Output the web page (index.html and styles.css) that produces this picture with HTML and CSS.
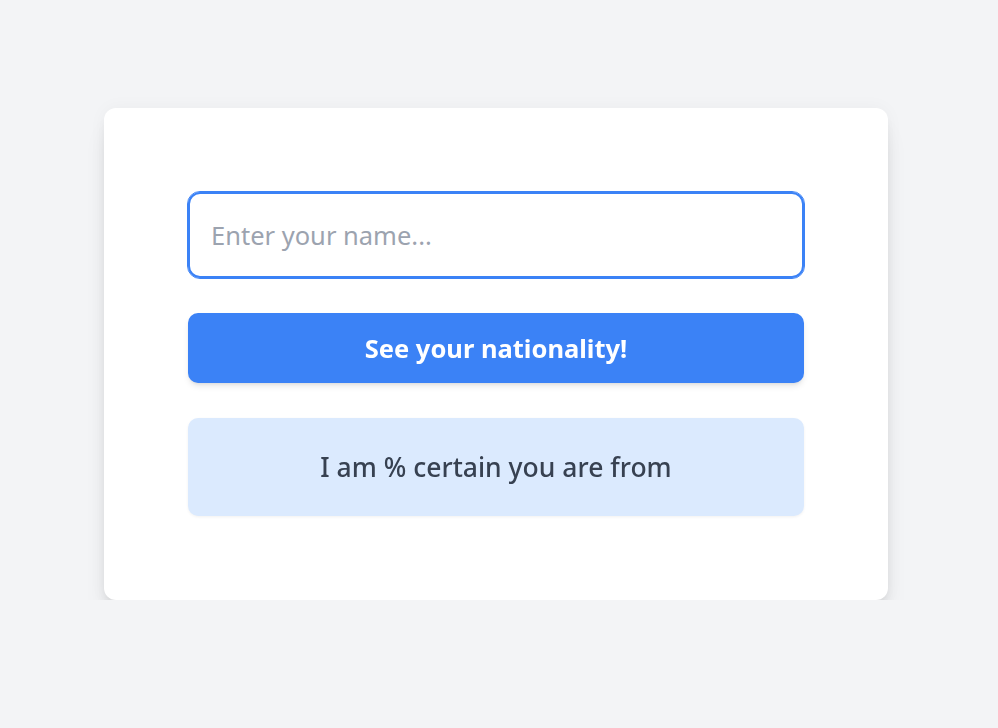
FILE: index.html
```html
<!DOCTYPE html>
<html lang="en">
<head>
<meta charset="utf-8">
<title>Nationality</title>
<link rel="stylesheet" href="styles.css">
</head>
<body>
<main class="page">
  <section class="card">
    <input class="name-input" type="text" placeholder="Enter your name..." autofocus>
    <button class="submit" type="button">See your nationality!</button>
    <div class="result">I am % certain you are from</div>
  </section>
</main>
</body>
</html>
```

FILE: styles.css
```css
html, body {
  margin: 0;
  padding: 0;
  background: #f3f4f6;
  font-family: "Noto Sans", "Open Sans", sans-serif;
}
.page {
  padding: 108px 110px 0 104px;
}
.card {
  background: #ffffff;
  border-radius: 12px;
  box-shadow: 0 20px 25px -5px rgba(0,0,0,0.1), 0 8px 12px -4px rgba(0,0,0,0.08), 0 0 18px rgba(0,0,0,0.04);
  padding: 84px;
  display: flex;
  flex-direction: column;
  gap: 35px;
}
.name-input {
  box-sizing: border-box;
  height: 86px;
  margin: 0;
  width: 100%;
  border: 2px solid #3b82f6;
  outline: 1px solid #3b82f6;
  border-radius: 12px;
  padding: 0 21px;
  font-family: inherit;
  font-size: 25.5px;
  color: #111827;
  caret-color: #000;
}
.name-input::placeholder {
  color: #9ca3af;
}
.submit {
  height: 70px;
  border: none;
  border-radius: 10px;
  background: #3b82f6;
  color: #ffffff;
  font-family: inherit;
  font-size: 25.5px;
  font-weight: 700;
  box-shadow: 0 4px 6px -1px rgba(0,0,0,0.1), 0 2px 4px -2px rgba(0,0,0,0.1);
  cursor: pointer;
}
.result {
  height: 98px;
  box-sizing: border-box;
  background: #dbeafe;
  border-radius: 10px;
  box-shadow: 0 1px 3px 0 rgba(0,0,0,0.06);
  display: flex;
  align-items: center;
  justify-content: center;
  color: #374151;
  font-size: 26.5px;
  font-weight: 500;
}
```
